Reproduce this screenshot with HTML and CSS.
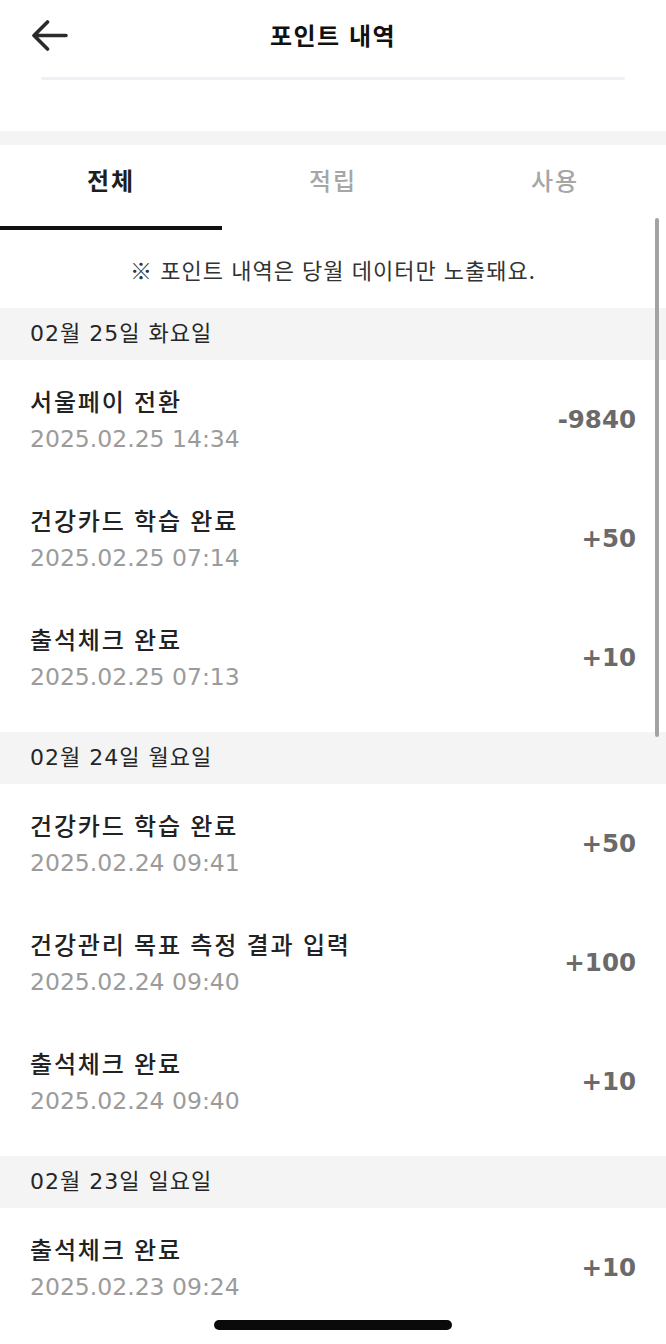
FILE: index.html
```html
<!DOCTYPE html>
<html lang="ko">
<head>
    <meta charset="UTF-8">
    <meta name="viewport" content="width=device-width, initial-scale=1.0">
    <title>포인트 내역</title>
    <link rel="stylesheet" href="styles.css">
</head>
<body>
    <div class="pantalla">
        <div class="cabecera">
            <button class="volver" aria-label="뒤로">
                <svg width="36" height="32" viewBox="0 0 36 32">
                    <path d="M34 15.5H3M15.5 2L2 15.5L15.5 29" fill="none" stroke="#2b2b2b" stroke-width="3.6" stroke-linecap="round" stroke-linejoin="round"/>
                </svg>
            </button>
            <h1>포인트 내역</h1>
        </div>
        <div class="linea-sombra"></div>
        <div class="separador"></div>

        <div class="tabs">
            <div class="tab activo">전체</div>
            <div class="tab">적립</div>
            <div class="tab">사용</div>
        </div>

        <p class="aviso">※ 포인트 내역은 당월 데이터만 노출돼요.</p>

        <div class="dia">02월 25일 화요일</div>
        <ul class="lista">
            <li class="item">
                <div class="info">
                    <p class="nombre">서울페이 전환</p>
                    <p class="fecha">2025.02.25 14:34</p>
                </div>
                <span class="monto">-9840</span>
            </li>
            <li class="item">
                <div class="info">
                    <p class="nombre">건강카드 학습 완료</p>
                    <p class="fecha">2025.02.25 07:14</p>
                </div>
                <span class="monto">+50</span>
            </li>
            <li class="item">
                <div class="info">
                    <p class="nombre">출석체크 완료</p>
                    <p class="fecha">2025.02.25 07:13</p>
                </div>
                <span class="monto">+10</span>
            </li>
        </ul>

        <div class="dia">02월 24일 월요일</div>
        <ul class="lista">
            <li class="item">
                <div class="info">
                    <p class="nombre">건강카드 학습 완료</p>
                    <p class="fecha">2025.02.24 09:41</p>
                </div>
                <span class="monto">+50</span>
            </li>
            <li class="item">
                <div class="info">
                    <p class="nombre">건강관리 목표 측정 결과 입력</p>
                    <p class="fecha">2025.02.24 09:40</p>
                </div>
                <span class="monto">+100</span>
            </li>
            <li class="item">
                <div class="info">
                    <p class="nombre">출석체크 완료</p>
                    <p class="fecha">2025.02.24 09:40</p>
                </div>
                <span class="monto">+10</span>
            </li>
        </ul>

        <div class="dia">02월 23일 일요일</div>
        <ul class="lista">
            <li class="item">
                <div class="info">
                    <p class="nombre">출석체크 완료</p>
                    <p class="fecha">2025.02.23 09:24</p>
                </div>
                <span class="monto">+10</span>
            </li>
        </ul>

        <div class="scroll"></div>
        <div class="indicador"></div>
    </div>
</body>
</html>
```
FILE: styles.css
```css
body {
    margin: 0;
    background: #ffffff;
    font-family: "Noto Sans CJK KR", "Noto Sans", sans-serif;
    color: #222222;
}

.pantalla {
    position: relative;
    width: 666px;
    height: 1344px;
    overflow: hidden;
    background: #ffffff;
}

.cabecera {
    height: 72px;
    display: flex;
    align-items: center;
    justify-content: center;
    position: relative;
}

.volver {
    position: absolute;
    left: 32px;
    top: 20px;
    padding: 0;
    border: none;
    background: none;
}

.cabecera h1 {
    margin: 0 0 4px;
    font-size: 24px;
    font-weight: 700;
    letter-spacing: 1.5px;
    color: #111111;
}

.linea-sombra {
    margin: 5px 41px 0;
    height: 3px;
    border-radius: 2px;
    background: #eef2f6;
}

.separador {
    margin-top: 51px;
    height: 14px;
    background: #f4f4f4;
}

.tabs {
    display: flex;
}

.tab {
    flex: 1;
    height: 85px;
    box-sizing: border-box;
    text-align: center;
    line-height: 70px;
    font-size: 24px;
    font-weight: 500;
    letter-spacing: 2px;
    color: #a6a6a6;
}

.tab.activo {
    font-weight: 700;
    color: #1e1e1e;
    border-bottom: 4px solid #111111;
}

.aviso {
    margin: 0;
    height: 78px;
    line-height: 78px;
    text-align: center;
    font-size: 22px;
    letter-spacing: 1px;
    color: #333333;
}

.dia {
    height: 52px;
    line-height: 52px;
    padding: 0 30px;
    background: #f4f4f4;
    font-family: "DejaVu Sans", "Noto Sans CJK KR", sans-serif;
    font-size: 22px;
    letter-spacing: 1px;
    color: #262626;
}

.lista {
    list-style: none;
    margin: 0;
    padding: 0 0 15px;
}

.item {
    height: 119px;
    padding: 0 30px;
    display: flex;
    align-items: center;
    justify-content: space-between;
}

.info p {
    margin: 0;
    line-height: 38px;
}

.nombre {
    font-size: 24px;
    font-weight: 500;
    letter-spacing: 1.8px;
    color: #222222;
}

.fecha {
    font-family: "DejaVu Sans", "Noto Sans CJK KR", sans-serif;
    font-size: 23.5px;
    color: #9b9b9b;
}

.monto {
    font-family: "DejaVu Sans", sans-serif;
    font-weight: 700;
    font-size: 24.5px;
    color: #6a6a6a;
}

/* barra de scroll flotante */
.scroll {
    position: absolute;
    left: 655px;
    top: 218px;
    width: 4px;
    height: 519px;
    border-radius: 2px;
    background: #a3a3a3;
}

.indicador {
    position: absolute;
    left: 214px;
    top: 1320px;
    width: 238px;
    height: 10px;
    border-radius: 5px;
    background: #0a0a0a;
}
```
